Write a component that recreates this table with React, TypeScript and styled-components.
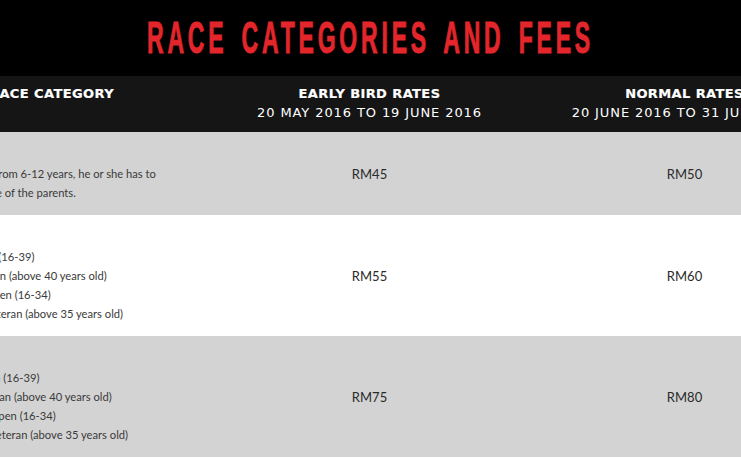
import React from "react";
import styled, { createGlobalStyle } from "styled-components";

const GlobalStyle = createGlobalStyle`
  html, body {
    margin: 0;
    padding: 0;
    background: #ffffff;
    overflow: hidden;
  }
  * { box-sizing: border-box; }
`;

const Page = styled.div`
  width: 741px;
  overflow: hidden;
`;

const TitleBar = styled.header`
  height: 76px;
  background: #000000;
  display: flex;
  align-items: center;
  justify-content: center;
`;

const Title = styled.h1`
  margin: 0;
  font-family: "Liberation Sans", Arial, sans-serif;
  font-weight: 700;
  font-size: 23px;
  line-height: 1;
  letter-spacing: 3.8px;
  word-spacing: 4px;
  color: #e3262c;
  -webkit-text-stroke: 0.5px #e3262c;
  transform: scaleY(1.95);
  white-space: nowrap;
`;

const Table = styled.div`
  margin-left: -80px;
  width: 1000px;
`;

const Row = styled.div<{ $tone: "head" | "gray" | "white" }>`
  display: grid;
  grid-template-columns: 292px 315px 315px;
  background: ${(p) =>
    p.$tone === "head" ? "#151515" : p.$tone === "gray" ? "#d3d3d3" : "#ffffff"};
  ${(p) => (p.$tone === "head" ? "height: 56px; padding-top: 9px;" : "padding: 13px 0;")}
`;

const HeadCell = styled.div<{ $align?: "left" | "center" }>`
  text-align: ${(p) => p.$align ?? "center"};
  padding-left: ${(p) => (p.$align === "left" ? "69px" : "0")};
  color: #ffffff;
  font-family: "DejaVu Sans", sans-serif;
  white-space: nowrap;
`;

const HeadLabel = styled.div`
  font-weight: 700;
  font-size: 13px;
  letter-spacing: 0.4px;
  line-height: 18px;
  -webkit-text-stroke: 0.2px #ffffff;
`;

const HeadDates = styled.div`
  font-weight: 400;
  font-size: 13px;
  letter-spacing: 0.9px;
  line-height: 20px;
`;

const CategoryCell = styled.div<{ $indent: number }>`
  padding-left: ${(p) => p.$indent}px;
  font-family: Lato, "Open Sans", sans-serif;
  font-size: 11.2px;
  line-height: 19px;
  color: #3a3a3a;
  white-space: nowrap;
`;

const CategoryName = styled.div`
  font-weight: 700;
`;

const Line = styled.div``;

const PriceCell = styled.div`
  align-self: center;
  text-align: center;
  font-family: Lato, "Open Sans", sans-serif;
  font-size: 13px;
  color: #2a2a2a;
  letter-spacing: 0.1px;
`;

type RowData = {
  name: string;
  lines: string[];
  early: string;
  normal: string;
  tone: "gray" | "white";
  indent: number;
};

const rows: RowData[] = [
  {
    name: "3KM",
    lines: ["Kids aged from 6-12 years, he or she has to", "be with one of the parents."],
    early: "RM45",
    normal: "RM50",
    tone: "gray",
    indent: 24,
  },
  {
    name: "10KM",
    lines: [
      "Men Open (16-39)",
      "Men Veteran (above 40 years old)",
      "Women Open (16-34)",
      "Women Veteran (above 35 years old)",
    ],
    early: "RM55",
    normal: "RM60",
    tone: "white",
    indent: 23,
  },
  {
    name: "21KM",
    lines: [
      "Men Open (16-39)",
      "Men Veteran (above 40 years old)",
      "Women Open (16-34)",
      "Women Veteran (above 35 years old)",
    ],
    early: "RM75",
    normal: "RM80",
    tone: "gray",
    indent: 28,
  },
];

export default function App() {
  return (
    <Page>
      <GlobalStyle />
      <TitleBar>
        <Title>RACE CATEGORIES AND FEES</Title>
      </TitleBar>
      <Table>
        <Row $tone="head">
          <HeadCell $align="left">
            <HeadLabel>RACE CATEGORY</HeadLabel>
          </HeadCell>
          <HeadCell>
            <HeadLabel>EARLY BIRD RATES</HeadLabel>
            <HeadDates>20 MAY 2016 TO 19 JUNE 2016</HeadDates>
          </HeadCell>
          <HeadCell>
            <HeadLabel>NORMAL RATES</HeadLabel>
            <HeadDates>20 JUNE 2016 TO 31 JULY 2016</HeadDates>
          </HeadCell>
        </Row>
        {rows.map((r) => (
          <Row key={r.name} $tone={r.tone}>
            <CategoryCell $indent={r.indent}>
              <CategoryName>{r.name}</CategoryName>
              {r.lines.map((l) => (
                <Line key={l}>{l}</Line>
              ))}
            </CategoryCell>
            <PriceCell>{r.early}</PriceCell>
            <PriceCell>{r.normal}</PriceCell>
          </Row>
        ))}
      </Table>
    </Page>
  );
}
